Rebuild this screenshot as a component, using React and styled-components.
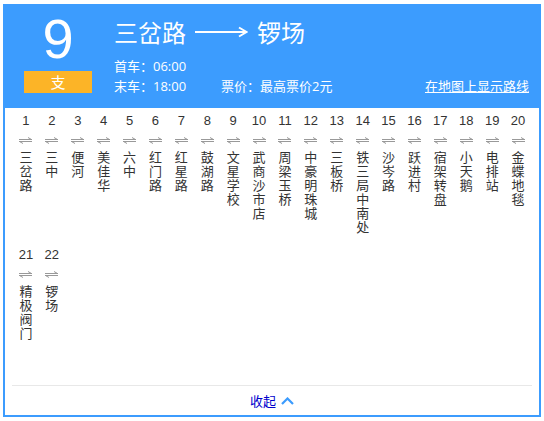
import React from 'react';
import styled, { createGlobalStyle } from 'styled-components';

const GlobalStyle = createGlobalStyle`
  body {
    margin: 0;
    background: #fff;
    font-family: "Open Sans", "Noto Sans CJK SC", sans-serif;
  }
`;

const BLUE = '#3c9cfe';

const Card = styled.div`
  box-sizing: border-box;
  width: 538px;
  margin: 4px 0 0 3px;
  border: 2px solid ${BLUE};
`;

const Header = styled.div`
  display: flex;
  height: 102px;
  box-sizing: border-box;
  padding: 0 10px 0 19px;
  background: ${BLUE};
  color: #fff;
`;

const LineBlock = styled.div`
  width: 68px;
  display: flex;
  flex-direction: column;
  align-items: center;
`;

const LineNumber = styled.div`
  font-family: "Liberation Sans", Arial, sans-serif;
  font-size: 56px;
  line-height: normal;
`;

const Badge = styled.div`
  width: 68px;
  height: 22px;
  background: #fcb427;
  color: #fff;
  font-family: "Noto Sans CJK SC", sans-serif;
  font-size: 15px;
  line-height: 22px;
  text-align: center;
`;

const Info = styled.div`
  flex: 1;
  margin-left: 22px;
  padding-top: 11px;
`;

const Title = styled.div`
  display: flex;
  align-items: center;
  height: 30px;
  font-family: "Noto Sans CJK SC", sans-serif;
  font-size: 24px;
  line-height: 30px;
`;

const TitleArrow = styled.svg`
  margin: 0 9px;
  display: block;
`;

const InfoRow = styled.div`
  display: flex;
  align-items: center;
  height: 20px;
  font-size: 13px;
  line-height: 20px;
  margin-top: ${p => p.$first ? '9px' : '0'};
`;

const InfoItem = styled.span`
  width: ${p => p.$w || 'auto'};
  white-space: nowrap;
`;

const MapLink = styled.a`
  margin-left: auto;
  color: #fff;
  text-decoration: underline;
  white-space: nowrap;
  cursor: pointer;
`;

const Stops = styled.div`
  display: grid;
  grid-template-columns: repeat(20, 1fr);
  grid-auto-rows: min-content;
  row-gap: 13px;
  align-items: start;
  height: 277px;
  box-sizing: border-box;
  padding: 5px 8px 0;
`;

const Stop = styled.div`
  display: flex;
  flex-direction: column;
  align-items: center;
  color: #333;
`;

const StopNo = styled.div`
  font-family: "Liberation Sans", Arial, sans-serif;
  font-size: 13px;
  line-height: 16px;
`;

const StopArrow = styled.svg`
  display: block;
  margin: 8px 0 6px;
`;

const StopName = styled.div`
  width: 13px;
  font-family: "Noto Sans CJK SC", sans-serif;
  font-size: 13px;
  line-height: 14px;
  word-break: break-all;
`;

const Footer = styled.div`
  margin: 0 7px;
  border-top: 1px solid #e8e8e8;
  height: 29px;
  display: flex;
  align-items: center;
  justify-content: center;
  gap: 5px;
  font-family: "Noto Sans CJK SC", sans-serif;
  font-size: 13px;
  color: #0000cd;
  cursor: pointer;
`;

const stops = [
  '三岔路', '三中', '便河', '美佳华', '六中', '红门路', '红星路', '鼓湖路',
  '文星学校', '武商沙市店', '周梁玉桥', '中豪明珠城', '三板桥', '铁三局中南处',
  '沙岑路', '跃进村', '宿架转盘', '小天鹅', '电排站', '金蝶地毯', '精极阀门', '锣场',
];

const Swap = () => (
  <StopArrow width="13" height="7" viewBox="0 0 13 7">
    <path d="M0 2.5H13M12.5 2.5L9 0.5M0 4.5H13M0.5 4.5L4 6.5" stroke="#999" strokeWidth="1" fill="none" />
  </StopArrow>
);

export default function App() {
  return (
    <>
      <GlobalStyle />
      <Card>
        <Header>
          <LineBlock>
            <LineNumber>9</LineNumber>
            <Badge>支</Badge>
          </LineBlock>
          <Info>
            <Title>
              <span>三岔路</span>
              <TitleArrow width="53" height="12" viewBox="0 0 53 12">
                <path d="M0 6H51M44 1.5L51.5 6L44 10.5" stroke="#fff" strokeWidth="2" fill="none" />
              </TitleArrow>
              <span>锣场</span>
            </Title>
            <InfoRow $first>
              <InfoItem>首车：06:00</InfoItem>
            </InfoRow>
            <InfoRow>
              <InfoItem $w="107px">末车：18:00</InfoItem>
              <InfoItem>票价：最高票价2元</InfoItem>
              <MapLink>在地图上显示路线</MapLink>
            </InfoRow>
          </Info>
        </Header>
        <Stops>
          {stops.map((name, i) => (
            <Stop key={i}>
              <StopNo>{i + 1}</StopNo>
              <Swap />
              <StopName>{name}</StopName>
            </Stop>
          ))}
        </Stops>
        <Footer>
          <span>收起</span>
          <svg width="13" height="8" viewBox="0 0 13 8">
            <path d="M1 7L6.5 1.5L12 7" stroke={BLUE} strokeWidth="2.2" fill="none" />
          </svg>
        </Footer>
      </Card>
    </>
  );
}
